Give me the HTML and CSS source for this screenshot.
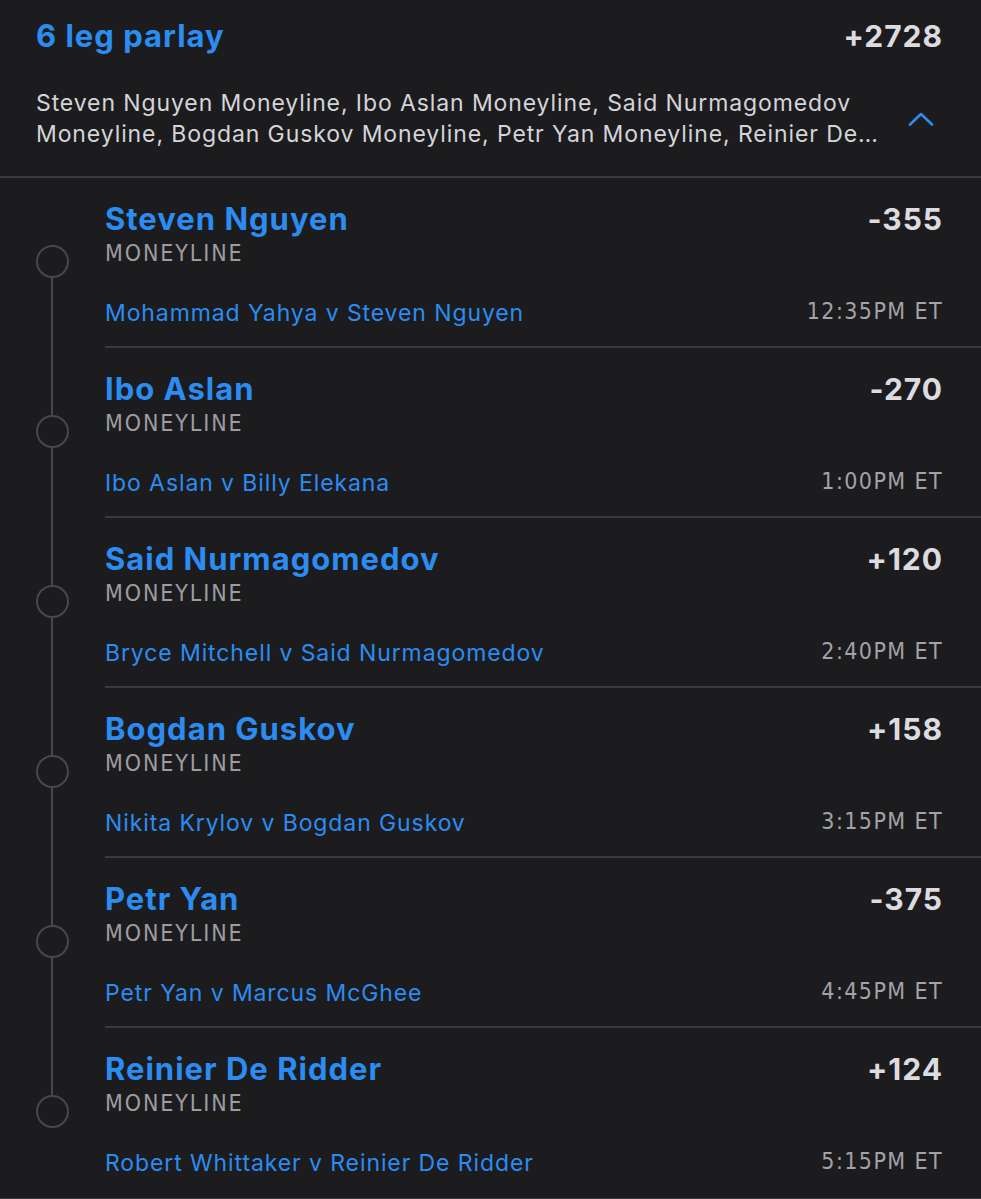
FILE: index.html
```html
<!DOCTYPE html>
<html>
<head>
	<meta charset='utf-8'>
	<title>6 leg parlay</title>
	<link rel="stylesheet" href="styles.css">
</head>
<body>

	<div class="slip">
		<div class="head">
			<div class="row">
				<div class="title">6 leg parlay</div>
				<div class="odds">+2728</div>
			</div>
			<div class="summary">
				<div class="desc">Steven Nguyen Moneyline, Ibo Aslan Moneyline, Said Nurmagomedov Moneyline, Bogdan Guskov Moneyline, Petr Yan Moneyline, Reinier De Ridder Moneyline</div>
				<svg class="chev" width="26" height="14" viewBox="0 0 26 14">
					<path d="M2 12.5 L13 2 L24 12.5" fill="none" stroke="#2b8cf2" stroke-width="2.6" stroke-linecap="round" stroke-linejoin="round"/>
				</svg>
			</div>
		</div>

		<div class="legs">
			<div class="leg first">
				<div class="rail"><div class="dot"></div></div>
				<div class="info">
					<div class="row">
						<div class="name">Steven Nguyen</div>
						<div class="odds">-355</div>
					</div>
					<div class="market">MONEYLINE</div>
					<div class="row bottom">
						<div class="match">Mohammad Yahya v Steven Nguyen</div>
						<div class="time">12:35PM ET</div>
					</div>
				</div>
			</div>

			<div class="leg">
				<div class="rail"><div class="dot"></div></div>
				<div class="info">
					<div class="row">
						<div class="name">Ibo Aslan</div>
						<div class="odds">-270</div>
					</div>
					<div class="market">MONEYLINE</div>
					<div class="row bottom">
						<div class="match">Ibo Aslan v Billy Elekana</div>
						<div class="time">1:00PM ET</div>
					</div>
				</div>
			</div>

			<div class="leg">
				<div class="rail"><div class="dot"></div></div>
				<div class="info">
					<div class="row">
						<div class="name">Said Nurmagomedov</div>
						<div class="odds">+120</div>
					</div>
					<div class="market">MONEYLINE</div>
					<div class="row bottom">
						<div class="match">Bryce Mitchell v Said Nurmagomedov</div>
						<div class="time">2:40PM ET</div>
					</div>
				</div>
			</div>

			<div class="leg">
				<div class="rail"><div class="dot"></div></div>
				<div class="info">
					<div class="row">
						<div class="name">Bogdan Guskov</div>
						<div class="odds">+158</div>
					</div>
					<div class="market">MONEYLINE</div>
					<div class="row bottom">
						<div class="match">Nikita Krylov v Bogdan Guskov</div>
						<div class="time">3:15PM ET</div>
					</div>
				</div>
			</div>

			<div class="leg">
				<div class="rail"><div class="dot"></div></div>
				<div class="info">
					<div class="row">
						<div class="name">Petr Yan</div>
						<div class="odds">-375</div>
					</div>
					<div class="market">MONEYLINE</div>
					<div class="row bottom">
						<div class="match">Petr Yan v Marcus McGhee</div>
						<div class="time">4:45PM ET</div>
					</div>
				</div>
			</div>

			<div class="leg last">
				<div class="rail"><div class="dot"></div></div>
				<div class="info">
					<div class="row">
						<div class="name">Reinier De Ridder</div>
						<div class="odds">+124</div>
					</div>
					<div class="market">MONEYLINE</div>
					<div class="row bottom">
						<div class="match">Robert Whittaker v Reinier De Ridder</div>
						<div class="time">5:15PM ET</div>
					</div>
				</div>
			</div>
		</div>
	</div>

</body>
</html>
```

FILE: styles.css
```css
body{
	margin: 0;
	background-color: #1c1c1e;
	font-family: Inter, Lato, sans-serif;
	color: #d6d6db;
}
.row{
	display: flex;
	justify-content: space-between;
	align-items: baseline;
}
.odds{
	font-size: 30px;
	line-height: 36px;
	font-weight: bold;
	letter-spacing: 1px;
	color: #dcdce0;
}

/* header */
.head{
	padding: 18px 38px 26px 36px;
	border-bottom: 2px solid #3a3a3c;
}
.title{
	font-size: 31px;
	line-height: 36px;
	font-weight: bold;
	letter-spacing: 1px;
	color: #2b8cf2;
}
.summary{
	display: flex;
	align-items: center;
	margin-top: 34px;
}
.desc{
	flex: 1;
	font-size: 23px;
	line-height: 31px;
	letter-spacing: 0.9px;
	color: #d4d4d9;
	display: -webkit-box;
	-webkit-line-clamp: 2;
	-webkit-box-orient: vertical;
	overflow: hidden;
}
.chev{
	flex: none;
	margin: 0 9px 0 27px;
}

/* legs */
.legs{
	border-bottom: 3px solid #3a3a3c;
}
.leg{
	display: flex;
	height: 170px;
}
.rail{
	position: relative;
	flex: none;
	width: 105px;
}
.rail::before{
	content: "";
	position: absolute;
	left: 51px;
	top: 0;
	bottom: 0;
	width: 2px;
	background-color: #48484b;
}
.first .rail::before{
	top: 99px;
}
.last .rail::before{
	bottom: 103px;
}
.dot{
	position: relative;
	width: 29px;
	height: 29px;
	margin: 67px 0 0 36px;
	border: 2px solid #48484b;
	border-radius: 50%;
	background-color: #1c1c1e;
}
.info{
	flex: 1;
	padding: 23px 38px 18px 0;
	border-bottom: 2px solid #3a3a3c;
}
.last .info{
	border-bottom: none;
}
.name{
	font-size: 31px;
	line-height: 36px;
	font-weight: bold;
	letter-spacing: 1px;
	color: #2b8cf2;
}
.market{
	margin-top: 2px;
	font-family: "Liberation Sans Narrow", "DejaVu Sans Condensed", sans-serif;
	font-size: 23px;
	line-height: 28px;
	letter-spacing: 1.9px;
	color: #9c9ca1;
}
.bottom{
	margin-top: 31px;
}
.match{
	font-size: 23px;
	line-height: 30px;
	letter-spacing: 0.9px;
	color: #2b8cf2;
}
.time{
	position: relative;
	top: -2px;
	font-family: "Liberation Sans Narrow", "DejaVu Sans Condensed", sans-serif;
	font-size: 23px;
	letter-spacing: 1.4px;
	color: #a2a2a7;
}
```
